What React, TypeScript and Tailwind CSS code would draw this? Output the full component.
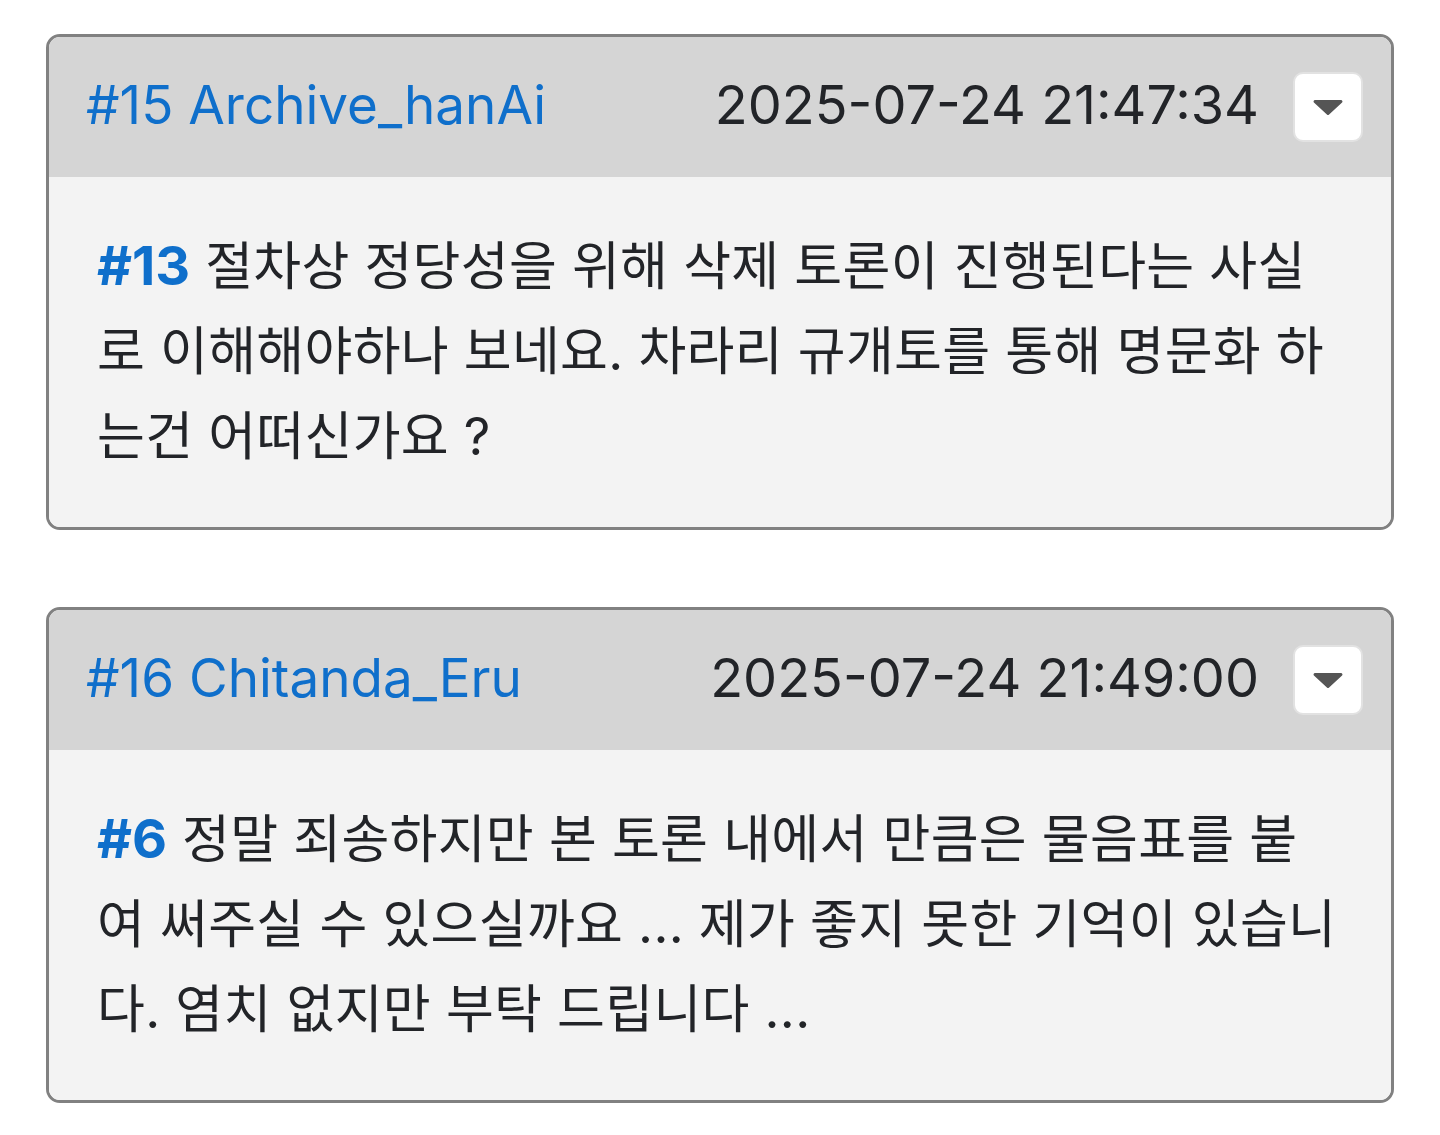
type Comment = {
  no: number;
  author: string;
  time: string;
  reply: number;
  text: string;
};

const comments: Comment[] = [
  {
    no: 15,
    author: 'Archive_hanAi',
    time: '2025-07-24 21:47:34',
    reply: 13,
    text: '절차상 정당성을 위해 삭제 토론이 진행된다는 사실로 이해해야하나 보네요. 차라리 규개토를 통해 명문화 하는건 어떠신가요 ?',
  },
  {
    no: 16,
    author: 'Chitanda_Eru',
    time: '2025-07-24 21:49:00',
    reply: 6,
    text: '정말 죄송하지만 본 토론 내에서 만큼은 물음표를 붙여 써주실 수 있으실까요 ... 제가 좋지 못한 기억이 있습니다. 염치 없지만 부탁 드립니다 ...',
  },
];

function CaretButton() {
  return (
    <button
      type="button"
      className="w-[70px] h-[70px] shrink-0 rounded-[10px] bg-white border-2 border-[#e2e2e2] flex items-center justify-center"
      aria-label="메뉴"
    >
      <svg viewBox="0 0 30 20" className="w-[30px] h-[20px]" fill="#555555">
        <path d="M2 3h26a1.5 1.5 0 0 1 1.1 2.5L16.1 17.4a1.5 1.5 0 0 1-2.2 0L.9 5.5A1.5 1.5 0 0 1 2 3z" />
      </svg>
    </button>
  );
}

function CommentCard({ c }: { c: Comment }) {
  return (
    <div className="border-[3px] border-[#818181] rounded-[14px] overflow-hidden">
      <div className="h-[140px] bg-[#d5d5d5] flex items-center pl-[37px] pr-[28px]">
        <a href="#" className="text-[#0f6fcb] text-[53px] leading-none -mt-[4px]">
          #{c.no} {c.author}
        </a>
        <span className="ml-auto mr-[34px] text-[54px] leading-none text-[#222428] -mt-[4px]">
          {c.time}
        </span>
        <CaretButton />
      </div>
      <div className="bg-[#f3f3f3] px-[48px] pt-[46px] pb-[48px] min-h-[350px]">
        <p className="text-[52px] leading-[85px] tracking-[0.3px] text-[#222428]">
          <a href="#" className="text-[#0f6fcb] font-bold text-[54px] tracking-normal">
            #{c.reply}
          </a>{' '}
          {c.text}
        </p>
      </div>
    </div>
  );
}

export default function App() {
  return (
    <div
      className="bg-white min-h-screen px-[46px] pt-[34px] flex flex-col gap-[77px]"
      style={{ fontFamily: 'Inter, "Noto Sans CJK KR", sans-serif' }}
    >
      {comments.map((c) => (
        <CommentCard key={c.no} c={c} />
      ))}
    </div>
  );
}
